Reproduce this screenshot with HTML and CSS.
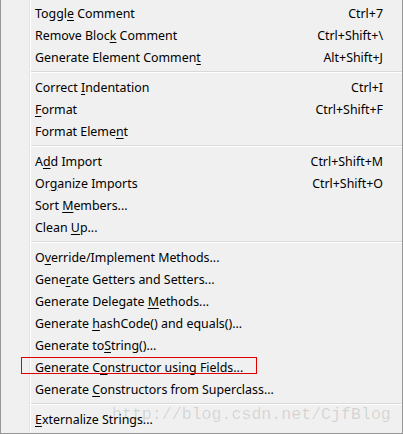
FILE: index.html
```html
<!DOCTYPE html>
<html>
<head>
<meta charset="utf-8">
<link rel="stylesheet" href="styles.css">
</head>
<body>
<div class="menu">
  <div class="gutter"></div>
  <div class="items">
    <div class="item"><span class="label">Toggl<u>e</u> Comment</span><span class="key">Ctrl+7</span></div>
    <div class="item"><span class="label">Remove Bloc<u>k</u> Comment</span><span class="key">Ctrl+Shift+\</span></div>
    <div class="item"><span class="label">Generate Element Commen<u>t</u></span><span class="key">Alt+Shift+J</span></div>
    <div class="sep"></div>
    <div class="item"><span class="label">Correct <u>I</u>ndentation</span><span class="key">Ctrl+I</span></div>
    <div class="item"><span class="label"><u>F</u>ormat</span><span class="key">Ctrl+Shift+F</span></div>
    <div class="item"><span class="label">Format Eleme<u>n</u>t</span></div>
    <div class="sep"></div>
    <div class="item"><span class="label">A<u>d</u>d Import</span><span class="key">Ctrl+Shift+M</span></div>
    <div class="item"><span class="label">Or<u>g</u>anize Imports</span><span class="key">Ctrl+Shift+O</span></div>
    <div class="item"><span class="label">Sort <u>M</u>embers...</span></div>
    <div class="item"><span class="label">Clean <u>U</u>p...</span></div>
    <div class="sep"></div>
    <div class="item"><span class="label">O<u>v</u>erride/Implement Methods...</span></div>
    <div class="item"><span class="label">Gene<u>r</u>ate Getters and Setters...</span></div>
    <div class="item"><span class="label">Generate Delegate <u>M</u>ethods...</span></div>
    <div class="item"><span class="label">Generate <u>h</u>ashCode() and equals()...</span></div>
    <div class="item"><span class="label">Generate to<u>S</u>tring()...</span></div>
    <div class="item"><span class="label">Generate C<u>o</u>nstructor using Fields...</span><span class="mark"></span></div>
    <div class="item"><span class="label">Generate <u>C</u>onstructors from Superclass...</span></div>
    <div class="sep"></div>
    <div class="item"><span class="label"><u>E</u>xternalize Strings...</span></div>
  </div>
  <div class="watermark">http://blog.csdn.net/CjfBlog</div>
</div>
</body>
</html>
```
FILE: styles.css
```css
html, body {
  margin: 0;
  padding: 0;
  background: #f0f0f0;
}
.menu {
  position: relative;
  width: 403px;
  height: 434px;
  box-sizing: border-box;
  background: #f0f0f0;
  border-left: 1px solid #979797;
  border-right: 1px solid #979797;
  border-bottom: 1px solid #979797;
  display: flex;
  font-family: "Noto Sans", "Liberation Sans", sans-serif;
  font-size: 12.4px;
  color: #000;
  overflow: hidden;
}
.gutter {
  width: 28px;
  flex: none;
  border-right: 1px solid #e2e3e3;
  box-shadow: 1px 0 0 #fff;
}
.items {
  flex: 1;
  padding-top: 2px;
  display: flex;
  flex-direction: column;
}
.item {
  position: relative;
  height: 22px;
  display: flex;
  align-items: center;
  justify-content: space-between;
  padding-left: 5px;
  padding-right: 19px;
}
.item u {
  text-decoration-thickness: 1px;
  text-underline-offset: 2px;
}
.sep {
  height: 8px;
  box-sizing: border-box;
  margin-left: 1px;
  position: relative;
}
.sep::after {
  content: "";
  position: absolute;
  left: 0;
  right: 0;
  top: 3px;
  height: 1px;
  background: #dadada;
  box-shadow: 0 1px 0 #fff;
}
.mark {
  position: absolute;
  left: -9px;
  top: 1px;
  width: 234px;
  height: 15px;
  border: 1px solid #e00000;
}
.watermark {
  position: absolute;
  left: 111px;
  top: 405px;
  font-family: "Liberation Mono", monospace;
  font-size: 16.6px;
  color: rgba(0, 0, 0, 0.13);
  white-space: nowrap;
  pointer-events: none;
}
```
